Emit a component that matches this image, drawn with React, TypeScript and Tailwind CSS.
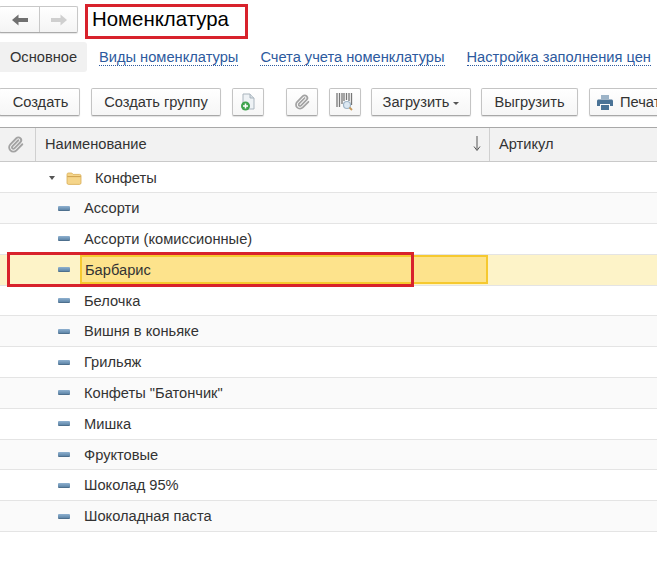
import { Paperclip } from 'lucide-react';

const items = [
  'Ассорти',
  'Ассорти (комиссионные)',
  'Барбарис',
  'Белочка',
  'Вишня в коньяке',
  'Грильяж',
  'Конфеты "Батончик"',
  'Мишка',
  'Фруктовые',
  'Шоколад 95%',
  'Шоколадная паста',
];

const btn =
  'h-[28px] shrink-0 flex items-center justify-center bg-gradient-to-b from-white to-[#f6f6f6] border border-[#c4c4c4] border-b-[#a8a8a8] rounded-[2px] shadow-[0_1px_1px_rgba(0,0,0,0.12)] text-[14.67px] text-[#333]';

function ItemIcon() {
  return <span className="block w-[12px] h-[5px] rounded-[1px] bg-gradient-to-b from-[#8fb1d0] to-[#5f86a8] border-b border-[#4d6f8d]" />;
}

function FolderIcon() {
  return (
    <svg width="16" height="13" viewBox="0 0 16 13">
      <path d="M1 2.500C1 1.500 1.600 1 2.400 1h3.400l1.300 1.400h6.500c.9 0 1.400.6 1.400 1.400V11c0 .8-.6 1.400-1.400 1.400H2.400C1.600 12.400 1 11.800 1 11z" fill="#f5d58a" stroke="#d9ad55" strokeWidth="0.8" />
      <path d="M1.300 4.600h13.400" stroke="#c99b45" strokeWidth="0.9" />
    </svg>
  );
}

function NewFileIcon() {
  return (
    <svg width="16" height="18" viewBox="0 0 16 18">
      <path d="M3 1h7l4 4v11H3z" fill="#eef2f5" stroke="#a9b4bd" strokeWidth="1" />
      <path d="M10 1v4h4" fill="#d5dde3" stroke="#a9b4bd" strokeWidth="1" />
      <circle cx="5.500" cy="13" r="4.500" fill="#3fa34d" />
      <path d="M5.500 10.500v5M3 13h5" stroke="#fff" strokeWidth="1.500" />
    </svg>
  );
}

function BarcodeIcon() {
  return (
    <svg width="18" height="20" viewBox="0 0 18 20">
      <path d="M1 1v14M3.500 1v14M6 1v11M8 1v8M10.500 1v7M13 1v8M15.500 1v12" stroke="#777" strokeWidth="1.300" />
      <circle cx="11" cy="13" r="3.500" fill="#dce8f2" stroke="#9fb4c6" strokeWidth="1.200" />
      <path d="M13.500 15.500l2.500 2.500" stroke="#c79a5b" strokeWidth="1.800" />
    </svg>
  );
}

function NavArrow({ color, flip }: { color: string; flip?: boolean }) {
  return (
    <svg width="16" height="12" viewBox="0 0 16 12" className={flip ? 'rotate-180' : ''}>
      <path d="M0 6l6.500-5.500v3.500H16v4H6.500v3.500z" fill={color} />
    </svg>
  );
}

function SortArrow() {
  return (
    <svg width="8" height="15" viewBox="0 0 8 15">
      <path d="M4 0v13.500" stroke="#555" strokeWidth="1" />
      <path d="M1 10.500l3 4 3-4" fill="none" stroke="#555" strokeWidth="1" />
    </svg>
  );
}

function PrinterIcon() {
  return (
    <svg width="16" height="15" viewBox="0 0 16 15">
      <path d="M4 0h8v4H4z" fill="#9db4c8" />
      <path d="M1.500 4.500h13c.8 0 1.500.7 1.500 1.500v5h-3V9H3v2H0V6c0-.8.7-1.500 1.500-1.500z" fill="#4a7396" />
      <path d="M4 10h8v5H4z" fill="#4a7396" />
    </svg>
  );
}

export default function App() {
  return (
    <main className="relative w-[657px] h-[566px] overflow-hidden bg-white font-['Liberation_Sans',Arial,sans-serif] text-[14.67px] text-[#333]">
      {/* шапка */}
      <div className="flex items-start pt-[4px] h-[42px]">
        <div className="mt-[2px] ml-[-1px] h-[27px] w-[79px] flex bg-gradient-to-b from-white to-[#f4f4f4] border border-[#c8c8c8] border-b-[#ababab] rounded-[2px] shadow-[0_1px_1px_rgba(0,0,0,0.1)]">
          <div className="w-[40px] flex items-center justify-center border-r border-[#c8c8c8]">
            <NavArrow color="#707070" />
          </div>
          <div className="flex-1 flex items-center justify-center">
            <NavArrow color="#cfcfcf" flip />
          </div>
        </div>
        <div className="ml-[7px] w-[163px] h-[35px] border-[3px] border-[#d8222c] pl-[4px] text-[20.4px] leading-[25px] text-black">
          Номенклатура
        </div>
      </div>

      {/* вкладки */}
      <div className="flex items-center h-[30px] whitespace-nowrap">
        <div className="w-[87px] h-full flex items-center justify-center bg-[#f1f1f1] rounded-r-[3px]">Основное</div>
        <a className="ml-[12px] text-[#2d5a9e] border-b border-dotted border-[#2d5a9e] leading-[16px]">Виды номенклатуры</a>
        <a className="ml-[22px] text-[#2d5a9e] border-b border-dotted border-[#2d5a9e] leading-[16px]">Счета учета номенклатуры</a>
        <a className="ml-[22px] text-[#2d5a9e] border-b border-dotted border-[#2d5a9e] leading-[16px]">Настройка заполнения цен</a>
      </div>

      {/* командная панель */}
      <div className="flex items-center mt-[16px] h-[28px] w-[700px]">
        <div className={`${btn} w-[81px] ml-[-1px] pl-[2px]`}>Создать</div>
        <div className={`${btn} w-[130px] ml-[11px]`}>Создать группу</div>
        <div className={`${btn} w-[32px] ml-[11px]`}><NewFileIcon /></div>
        <div className={`${btn} w-[32px] ml-[22px]`}><Paperclip size={16} strokeWidth={2.6} className="text-[#a3a3a3]" /></div>
        <div className={`${btn} w-[32px] ml-[11px]`}><BarcodeIcon /></div>
        <div className={`${btn} w-[100px] ml-[10px] gap-[4px]`}>
          Загрузить
          <span className="mt-[2px] border-x-[3px] border-x-transparent border-t-[3px] border-t-[#555]" />
        </div>
        <div className={`${btn} w-[97px] ml-[10px]`}>Выгрузить</div>
        <div className={`${btn} w-[90px] ml-[11px] justify-start pl-[7px] gap-[7px]`}>
          <PrinterIcon />
          Печать
        </div>
      </div>

      {/* таблица */}
      <div className="mt-[11px] flex h-[35px] bg-[#f2f2f2] border-y border-t-[#a8a8a8] border-b-[#c9c9c9]">
        <div className="w-[36px] flex items-center justify-center pr-[5px] border-r border-[#d0d0d0]">
          <Paperclip size={17} strokeWidth={2.6} className="text-[#a3a3a3]" />
        </div>
        <div className="w-[454px] flex items-center justify-between pl-[9px] pr-[8px] pb-[2px] border-r border-[#d0d0d0]">
          Наименование
          <SortArrow />
        </div>
        <div className="flex-1 flex items-center pl-[9px] pb-[2px]">Артикул</div>
      </div>

      <div className="flex items-center h-[31.3px] pt-[2px] border-b border-[#e4e4e4] pl-[49px]">
        <span className="border-x-[3.5px] border-x-transparent border-t-[4px] border-t-[#555]" />
        <span className="ml-[11px] flex"><FolderIcon /></span>
        <span className="ml-[13px]">Конфеты</span>
      </div>

      {items.map((name, i) => {
        const active = name === 'Барбарис';
        return (
          <div
            key={name}
            className={`flex items-center h-[30.8px] border-b border-[#e4e4e4] ${active ? 'bg-[#fdf3c8]' : i % 2 === 0 ? 'bg-[#fafafa]' : 'bg-white'}`}
          >
            <div className="w-[70px] flex justify-end"><ItemIcon /></div>
            {active ? (
              <div className="ml-[10px] w-[408px] h-[29px] flex items-center pl-[3px] bg-[#fde38c] border-2 border-[#f6c92f]">{name}</div>
            ) : (
              <div className="ml-[14px]">{name}</div>
            )}
          </div>
        );
      })}

      {/* красная рамка поверх строки */}
      <div className="absolute left-[7px] top-[252px] w-[407px] h-[35px] border-[3px] border-[#d8222c]" />
    </main>
  );
}
